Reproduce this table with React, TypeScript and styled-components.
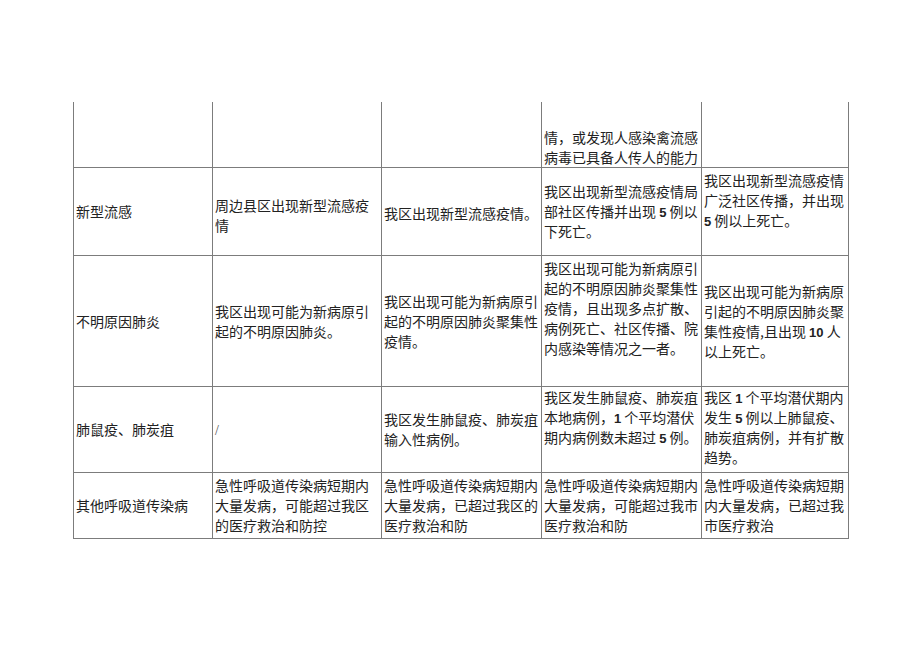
import React from 'react'
import styled, { createGlobalStyle } from 'styled-components'

const GlobalStyle = createGlobalStyle`
  html, body {
    margin: 0;
    padding: 0;
    background: #ffffff;
  }
  body {
    font-family: "Noto Sans CJK SC", "Noto Sans", sans-serif;
    color: #222222;
  }
`

const Page = styled.div`
  width: 920px;
  height: 651px;
  box-sizing: border-box;
  padding: 102px 0 0 73px;
  background: #ffffff;
`

const Table = styled.table`
  border-collapse: collapse;
  table-layout: fixed;
  width: 775px;
  font-size: 14px;
  line-height: 20px;
`

const Row = styled.tr<{ h: number; open?: boolean }>`
  height: ${({ h }) => h}px;

  & > td {
    border-top: ${({ open }) => (open ? 'none' : '1px solid #7c7c7c')};
  }
`

const Cell = styled.td<{ v?: 'top' | 'middle' | 'bottom'; pt?: number }>`
  border: 1px solid #7c7c7c;
  padding: ${({ pt }) => pt ?? 0}px 1px 0 2px;
  vertical-align: ${({ v }) => v ?? 'middle'};
  overflow: hidden;
`

const Line = styled.div`
  display: block;
  white-space: nowrap;
  height: 20px;
`

const Num = styled.b`
  font-family: "Liberation Sans", Arial, sans-serif;
  font-weight: 700;
  font-size: 13px;
`

const Slash = styled.span`
  color: #555555;
  font-family: "Liberation Serif", serif;
`

export default function App() {
  return (
    <>
      <GlobalStyle />
      <Page>
        <Table>
          <colgroup>
            <col style={{ width: 139 }} />
            <col style={{ width: 169 }} />
            <col style={{ width: 160 }} />
            <col style={{ width: 160 }} />
            <col style={{ width: 147 }} />
          </colgroup>
          <tbody>
            <Row h={65} open>
              <Cell />
              <Cell />
              <Cell />
              <Cell v="bottom">
                <Line>情，或发现人感染禽流感</Line>
                <Line>病毒已具备人传人的能力</Line>
              </Cell>
              <Cell />
            </Row>

            <Row h={88}>
              <Cell>
                <Line>新型流感</Line>
              </Cell>
              <Cell pt={8}>
                <Line>周边县区出现新型流感疫</Line>
                <Line>情</Line>
              </Cell>
              <Cell pt={4}>
                <Line>我区出现新型流感疫情。</Line>
              </Cell>
              <Cell>
                <Line>我区出现新型流感疫情局</Line>
                <Line>
                  部社区传播并出现 <Num>5</Num> 例以
                </Line>
                <Line>下死亡。</Line>
              </Cell>
              <Cell v="top" pt={2}>
                <Line>我区出现新型流感疫情</Line>
                <Line>广泛社区传播，并出现</Line>
                <Line>
                  <Num>5</Num> 例以上死亡。
                </Line>
              </Cell>
            </Row>

            <Row h={131}>
              <Cell>
                <Line>不明原因肺炎</Line>
              </Cell>
              <Cell>
                <Line>我区出现可能为新病原引</Line>
                <Line>起的不明原因肺炎。</Line>
              </Cell>
              <Cell>
                <Line>我区出现可能为新病原引</Line>
                <Line>起的不明原因肺炎聚集性</Line>
                <Line>疫情。</Line>
              </Cell>
              <Cell v="top" pt={2}>
                <Line>我区出现可能为新病原引</Line>
                <Line>起的不明原因肺炎聚集性</Line>
                <Line>疫情，且出现多点扩散、</Line>
                <Line>病例死亡、社区传播、院</Line>
                <Line>内感染等情况之一者。</Line>
              </Cell>
              <Cell>
                <Line>我区出现可能为新病原</Line>
                <Line>引起的不明原因肺炎聚</Line>
                <Line>
                  集性疫情,且出现 <Num>10</Num> 人
                </Line>
                <Line>以上死亡。</Line>
              </Cell>
            </Row>

            <Row h={86}>
              <Cell>
                <Line>肺鼠疫、肺炭疽</Line>
              </Cell>
              <Cell>
                <Line>
                  <Slash>/</Slash>
                </Line>
              </Cell>
              <Cell>
                <Line>我区发生肺鼠疫、肺炭疽</Line>
                <Line>输入性病例。</Line>
              </Cell>
              <Cell v="top">
                <Line>我区发生肺鼠疫、肺炭疽</Line>
                <Line>
                  本地病例，<Num>1</Num> 个平均潜伏
                </Line>
                <Line>
                  期内病例数未超过 <Num>5</Num> 例。
                </Line>
              </Cell>
              <Cell v="top">
                <Line>
                  我区 <Num>1</Num> 个平均潜伏期内
                </Line>
                <Line>
                  发生 <Num>5</Num> 例以上肺鼠疫、
                </Line>
                <Line>肺炭疽病例，并有扩散</Line>
                <Line>趋势。</Line>
              </Cell>
            </Row>

            <Row h={66}>
              <Cell>
                <Line>其他呼吸道传染病</Line>
              </Cell>
              <Cell>
                <Line>急性呼吸道传染病短期内</Line>
                <Line>大量发病，可能超过我区</Line>
                <Line>的医疗救治和防控</Line>
              </Cell>
              <Cell>
                <Line>急性呼吸道传染病短期内</Line>
                <Line>大量发病，已超过我区的</Line>
                <Line>医疗救治和防</Line>
              </Cell>
              <Cell>
                <Line>急性呼吸道传染病短期内</Line>
                <Line>大量发病，可能超过我市</Line>
                <Line>医疗救治和防</Line>
              </Cell>
              <Cell>
                <Line>急性呼吸道传染病短期</Line>
                <Line>内大量发病，已超过我</Line>
                <Line>市医疗救治</Line>
              </Cell>
            </Row>
          </tbody>
        </Table>
      </Page>
    </>
  )
}
